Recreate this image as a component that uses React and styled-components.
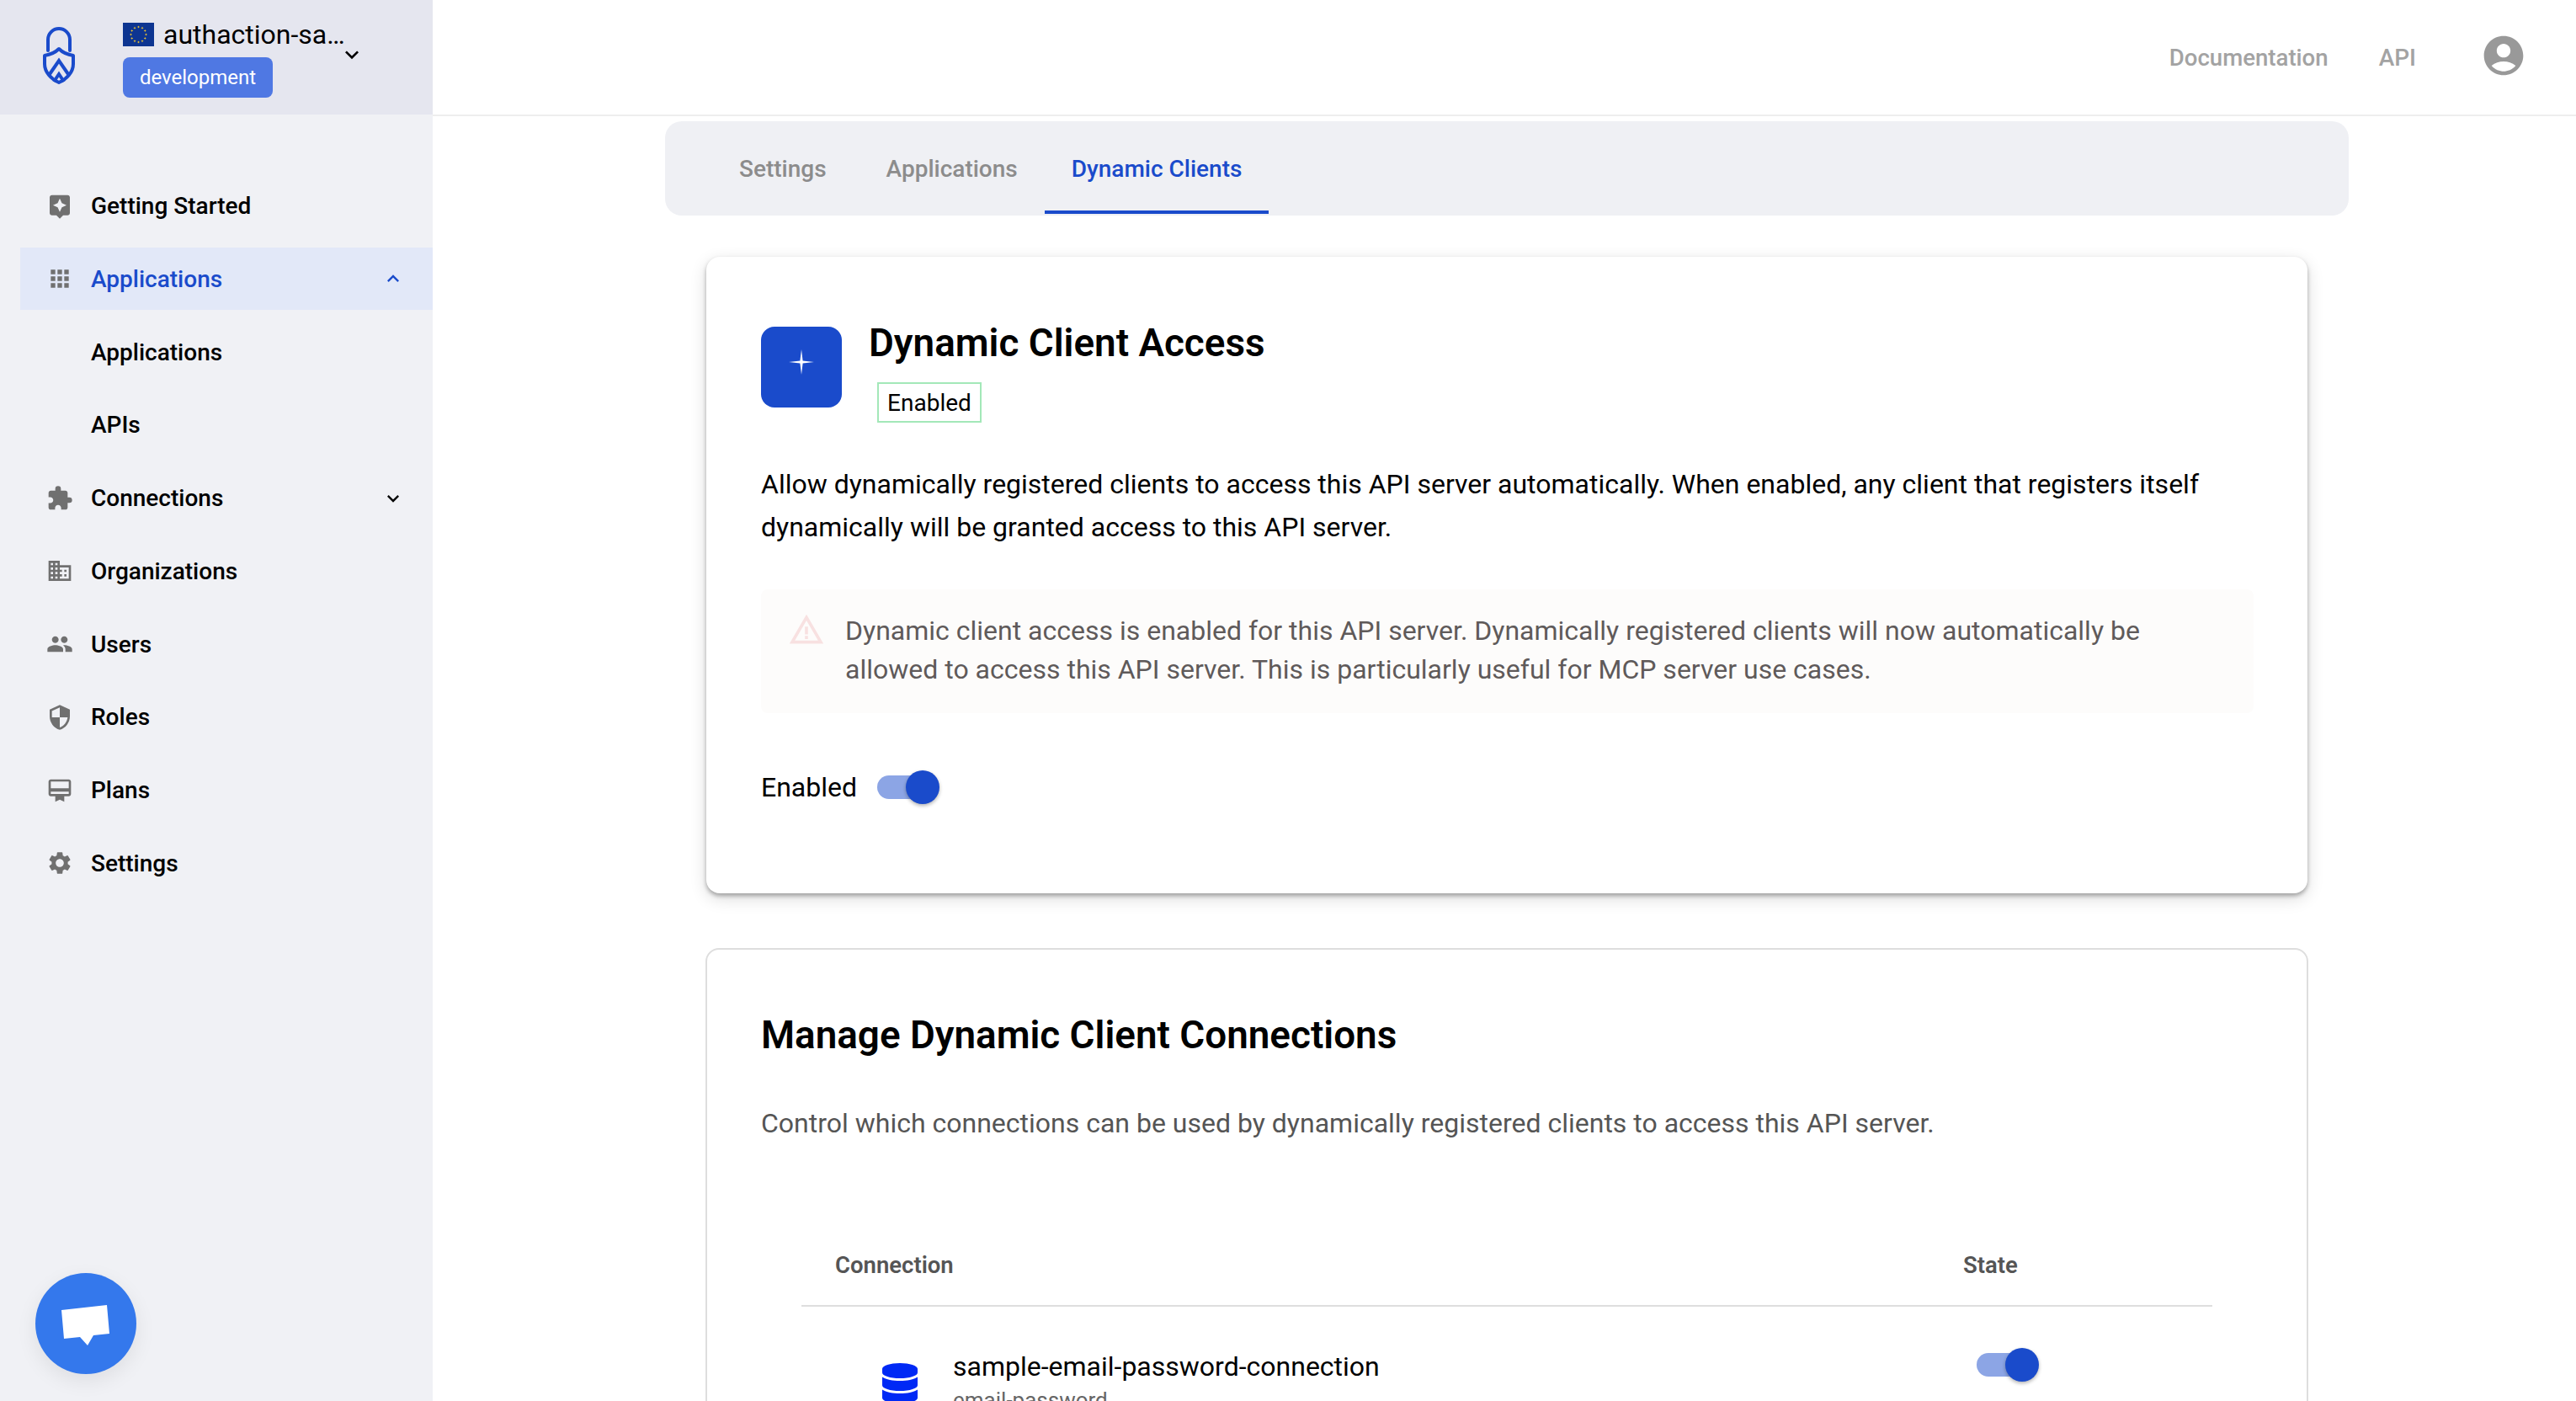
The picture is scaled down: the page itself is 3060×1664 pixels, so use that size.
import React from "react";
import styled, { createGlobalStyle } from "styled-components";
import {
  MdAssistant,
  MdApps,
  MdExtension,
  MdDomain,
  MdPeople,
  MdSecurity,
  MdCardMembership,
  MdSettings,
  MdExpandMore,
  MdExpandLess,
  MdAccountCircle,
  MdWarningAmber,
} from "react-icons/md";
import { FaDatabase } from "react-icons/fa";

const GlobalStyle = createGlobalStyle`
  html, body {
    margin: 0;
    height: 100%;
    overflow: hidden;
    background: #ffffff;
    font-family: Roboto, "Noto Sans", sans-serif;
  }
  * { box-sizing: border-box; }
`;

const Shell = styled.div`
  display: flex;
  width: 3060px;
  height: 1664px;
  overflow: hidden;
  position: relative;
`;

// Sidebar

const Sidebar = styled.aside`
  width: 514px;
  flex: none;
  background: #f0f1f5;
  display: flex;
  flex-direction: column;
`;

const Project = styled.div`
  height: 136px;
  background: #e5e6ef;
  display: flex;
  padding: 32px 0 0 51px;
`;

const Logo = styled.svg`
  width: 38px;
  height: 68px;
  flex: none;
  color: #1a4bcb;
`;

const ProjectInfo = styled.div`
  margin: -5px 0 0 57px;
  display: flex;
  flex-direction: column;
  position: relative;
  width: 280px;
`;

const ProjectName = styled.div`
  display: flex;
  align-items: center;
  gap: 11px;
  height: 28px;
  font-size: 32px;
  line-height: 28px;
  color: #000;
`;

const Flag = styled.svg`
  width: 37px;
  height: 28px;
  flex: none;
`;

const EnvBadge = styled.span`
  margin-top: 13px;
  width: 178px;
  height: 48px;
  background: #4f78e3;
  color: #fff;
  border-radius: 8px;
  font-size: 24px;
  display: flex;
  align-items: center;
  justify-content: center;
`;

const ProjectCaret = styled.span`
  position: absolute;
  left: 256px;
  top: 22px;
  font-size: 32px;
  line-height: 0;
  color: #000;
`;

const Nav = styled.nav`
  padding: 71.5px 0 0 24px;
  display: flex;
  flex-direction: column;
  gap: 12.75px;
`;

const NavItem = styled.div`
  height: 74px;
  display: flex;
  align-items: center;
  padding-left: 84px;
  position: relative;
  font-size: 28px;
  font-weight: 500;
  color: ${(p) => (p.$active ? "#1a4bcb" : "#000")};
  background: ${(p) => (p.$active ? "#e2e8f8" : "transparent")};
`;

const NavIcon = styled.span`
  position: absolute;
  left: 31px;
  top: 50%;
  transform: translateY(-50%);
  font-size: 32px;
  line-height: 0;
  color: #707070;
`;

const NavCaret = styled.span`
  position: absolute;
  left: 429px;
  top: 50%;
  transform: translateY(-50%);
  font-size: 28px;
  line-height: 0;
  color: ${(p) => (p.$active ? "#1a4bcb" : "#000")};
`;

const ChatButton = styled.div`
  position: absolute;
  left: 42px;
  top: 1512px;
  width: 120px;
  height: 120px;
  border-radius: 50%;
  background: #3478ec;
  box-shadow: 0 8px 24px rgba(0, 0, 0, 0.08);
`;

const ChatGlyph = styled.svg`
  width: 120px;
  height: 120px;
  display: block;
`;

// Main column

const Main = styled.main`
  flex: 1;
  min-width: 0;
  display: flex;
  flex-direction: column;
`;

const Topbar = styled.header`
  height: 138px;
  flex: none;
  border-bottom: 2px solid #eeeeee;
  display: flex;
  align-items: center;
  justify-content: flex-end;
  padding: 0 58px 0 0;
`;

const TopLink = styled.a`
  font-size: ${(p) => p.$size || 28}px;
  font-weight: 500;
  color: #a3a3a3;
  margin-right: ${(p) => p.$gap}px;
`;

const Avatar = styled.span`
  font-size: 56px;
  line-height: 0;
  color: #999999;
  margin-top: -4px;
`;

const Content = styled.div`
  width: 2000px;
  margin: 6px 0 0 276px;
`;

const Tabs = styled.div`
  height: 112px;
  background: #eff0f4;
  border-radius: 20px;
  display: flex;
  padding: 0 0 2px 56px;
`;

const Tab = styled.div`
  height: 110px;
  padding: 6px 32px 0;
  margin-right: ${(p) => p.$gap || 0}px;
  display: flex;
  align-items: center;
  font-size: 28px;
  font-weight: 500;
  color: ${(p) => (p.$active ? "#1a4bcb" : "#8c8c8c")};
  border-bottom: 4px solid ${(p) => (p.$active ? "#1a4bcb" : "transparent")};
`;

const Cards = styled.div`
  padding: 49px 48px 0;
  display: flex;
  flex-direction: column;
  gap: 65px;
`;

const AccessCard = styled.section`
  background: #fff;
  border-radius: 16px;
  margin: 0 1px;
  padding: 83px 64px 103px 65px;
  box-shadow: 0 3px 5px rgba(0, 0, 0, 0.3), 0 6px 20px rgba(0, 0, 0, 0.14);
`;

const AccessHead = styled.div`
  display: flex;
  gap: 32px;
`;

const IconTile = styled.div`
  width: 96px;
  height: 96px;
  flex: none;
  background: #1a4bcb;
  border-radius: 16px;
  display: flex;
  align-items: center;
  justify-content: center;
  padding-bottom: 12px;
`;

const Sparkle = styled.svg`
  width: 30px;
  height: 30px;
`;

const CardTitle = styled.h2`
  margin: -2px 0 0;
  font-size: 45.8px;
  font-weight: 600;
  line-height: 44px;
  color: #000;
`;

const StatusTag = styled.span`
  display: inline-flex;
  align-items: center;
  justify-content: center;
  width: 124px;
  height: 48px;
  margin: 24px 0 0 10px;
  border: 2px solid #a3e8b8;
  font-size: 28px;
  color: #000;
`;

const Lead = styled.p`
  margin: 48px 0 0;
  font-size: 32px;
  line-height: 51px;
  color: #000;
`;

const Notice = styled.div`
  margin-top: 48px;
  height: 147px;
  background: #fdfcfb;
  border-radius: 8px;
  padding: 26px 32px 0;
  display: flex;
  gap: 24px;
`;

const NoticeIcon = styled.span`
  font-size: 44px;
  line-height: 0;
  color: #f8e1e1;
  flex: none;
`;

const NoticeText = styled.div`
  font-size: 32px;
  line-height: 46px;
  color: #5f5a5a;
`;

const ToggleRow = styled.div`
  margin-top: 65px;
  display: flex;
  align-items: center;
  gap: 24px;
  height: 46px;
  font-size: 32px;
  color: #000;
`;

const Switch = styled.span`
  display: inline-block;
  position: relative;
  width: 68px;
  height: 28px;
  border-radius: 14px;
  background: #8ca5e5;
  flex: none;

  &::after {
    content: "";
    position: absolute;
    left: 34px;
    top: -6px;
    width: 40px;
    height: 40px;
    border-radius: 50%;
    background: #1a4bcb;
    box-shadow: 0 2px 4px rgba(0, 0, 0, 0.3);
  }
`;

const ManageCard = styled.section`
  background: #fff;
  border: 2px solid #dedede;
  border-radius: 16px;
  padding: 72px 63px 40px 64px;
`;

const ManageTitle = styled.h2`
  margin: 0;
  font-size: 45.8px;
  font-weight: 600;
  line-height: 60px;
  color: #000;
`;

const ManageText = styled.p`
  margin: 51px 0 0;
  font-size: 32px;
  line-height: 46px;
  color: #555555;
`;

const Table = styled.div`
  margin: 97px 49px 0 48px;
`;

const TableHead = styled.div`
  display: grid;
  grid-template-columns: 1fr 296px;
  height: 98px;
  align-items: center;
  padding-left: 40px;
  border-bottom: 2px solid #dedede;
  font-size: 27.5px;
  font-weight: 600;
  color: #555555;
`;

const TableRow = styled.div`
  display: grid;
  grid-template-columns: 1fr 296px;
  padding: 51px 0 0 93px;
`;

const ConnectionCell = styled.div`
  display: flex;
  gap: 39px;
`;

const DbIcon = styled.span`
  font-size: 48px;
  line-height: 0;
  color: #0029f5;
  margin-top: 16px;
`;

const ConnectionName = styled.div`
  font-size: 32px;
  line-height: 40px;
  color: #000;
`;

const ConnectionType = styled.div`
  font-size: 26px;
  line-height: 40px;
  color: #666666;
`;

const StateCell = styled.div`
  padding: 4px 0 0 16px;
`;

const FlagArt = () => {
  const stars = Array.from({ length: 12 }, (_, i) => {
    const a = (i * Math.PI) / 6;
    return [18.5 + 9 * Math.sin(a), 14 - 9 * Math.cos(a)];
  });
  return (
    <Flag viewBox="0 0 37 28">
      <rect width="37" height="28" fill="#0d3591" />
      {stars.map(([x, y], i) => (
        <path
          key={i}
          fill="#f4c92e"
          d={`M${x} ${y - 1.6}l.5 1.1 1.1.5-1.1.5-.5 1.1-.5-1.1-1.1-.5 1.1-.5z`}
        />
      ))}
    </Flag>
  );
};

const navItems = [
  { label: "Getting Started", Icon: MdAssistant },
  { label: "Applications", Icon: MdApps, active: true, Caret: MdExpandLess },
  { label: "Applications" },
  { label: "APIs" },
  { label: "Connections", Icon: MdExtension, Caret: MdExpandMore },
  { label: "Organizations", Icon: MdDomain },
  { label: "Users", Icon: MdPeople },
  { label: "Roles", Icon: MdSecurity },
  { label: "Plans", Icon: MdCardMembership },
  { label: "Settings", Icon: MdSettings },
];

export default function App() {
  return (
    <Shell>
      <GlobalStyle />
      <Sidebar>
        <Project>
          <Logo viewBox="0 0 38 68" fill="none" stroke="currentColor">
            <path d="M6 28V15a13 13 0 0 1 26 0v13" strokeWidth="4" strokeLinecap="round" />
            <path
              d="M19 26c-4 4-11 7-17 8v10c0 10 8 18 17 22 9-4 17-12 17-22V34c-6-1-13-4-17-8z"
              strokeWidth="4"
              strokeLinejoin="round"
            />
            <path d="M8 56l11-16 11 16" strokeWidth="4" />
            <path d="M13 65l6-9 6 9" strokeWidth="4" />
          </Logo>
          <ProjectInfo>
            <ProjectName>
              <FlagArt />
              authaction-sa…
            </ProjectName>
            <EnvBadge>development</EnvBadge>
            <ProjectCaret>
              <MdExpandMore />
            </ProjectCaret>
          </ProjectInfo>
        </Project>
        <Nav>
          {navItems.map(({ label, Icon, Caret, active }, i) => (
            <NavItem key={i} $active={active}>
              {Icon && (
                <NavIcon>
                  <Icon />
                </NavIcon>
              )}
              {label}
              {Caret && (
                <NavCaret $active={active}>
                  <Caret />
                </NavCaret>
              )}
            </NavItem>
          ))}
        </Nav>
        <ChatButton>
          <ChatGlyph viewBox="0 0 120 120">
            <polygon fill="#fff" points="31,44 85,38 88,72 69,74 62,86 53,76 34,78" />
          </ChatGlyph>
        </ChatButton>
      </Sidebar>

      <Main>
        <Topbar>
          <TopLink $gap={60} $size={27.6}>
            Documentation
          </TopLink>
          <TopLink $gap={76}>API</TopLink>
          <Avatar>
            <MdAccountCircle />
          </Avatar>
        </Topbar>
        <Content>
          <Tabs>
            <Tab $gap={7}>Settings</Tab>
            <Tab>Applications</Tab>
            <Tab $active>Dynamic Clients</Tab>
          </Tabs>
          <Cards>
            <AccessCard>
              <AccessHead>
                <IconTile>
                  <Sparkle viewBox="0 0 28 28">
                    <path fill="#fff" d="M14 0l1.500 12.500 12.500 1.500-12.500 1.500-1.500 12.500-1.500-12.500-12.500-1.500 12.500-1.500z" />
                  </Sparkle>
                </IconTile>
                <div>
                  <CardTitle>Dynamic Client Access</CardTitle>
                  <StatusTag>Enabled</StatusTag>
                </div>
              </AccessHead>
              <Lead>
                Allow dynamically registered clients to access this API server automatically. When
                enabled, any client that registers itself dynamically will be granted access to this
                API server.
              </Lead>
              <Notice>
                <NoticeIcon>
                  <MdWarningAmber />
                </NoticeIcon>
                <NoticeText>
                  Dynamic client access is enabled for this API server. Dynamically registered
                  clients will now automatically be allowed to access this API server. This is
                  particularly useful for MCP server use cases.
                </NoticeText>
              </Notice>
              <ToggleRow>
                Enabled
                <Switch />
              </ToggleRow>
            </AccessCard>

            <ManageCard>
              <ManageTitle>Manage Dynamic Client Connections</ManageTitle>
              <ManageText>
                Control which connections can be used by dynamically registered clients to access
                this API server.
              </ManageText>
              <Table>
                <TableHead>
                  <span>Connection</span>
                  <span>State</span>
                </TableHead>
                <TableRow>
                  <ConnectionCell>
                    <DbIcon>
                      <FaDatabase />
                    </DbIcon>
                    <div>
                      <ConnectionName>sample-email-password-connection</ConnectionName>
                      <ConnectionType>email-password</ConnectionType>
                    </div>
                  </ConnectionCell>
                  <StateCell>
                    <Switch />
                  </StateCell>
                </TableRow>
              </Table>
            </ManageCard>
          </Cards>
        </Content>
      </Main>
    </Shell>
  );
}
